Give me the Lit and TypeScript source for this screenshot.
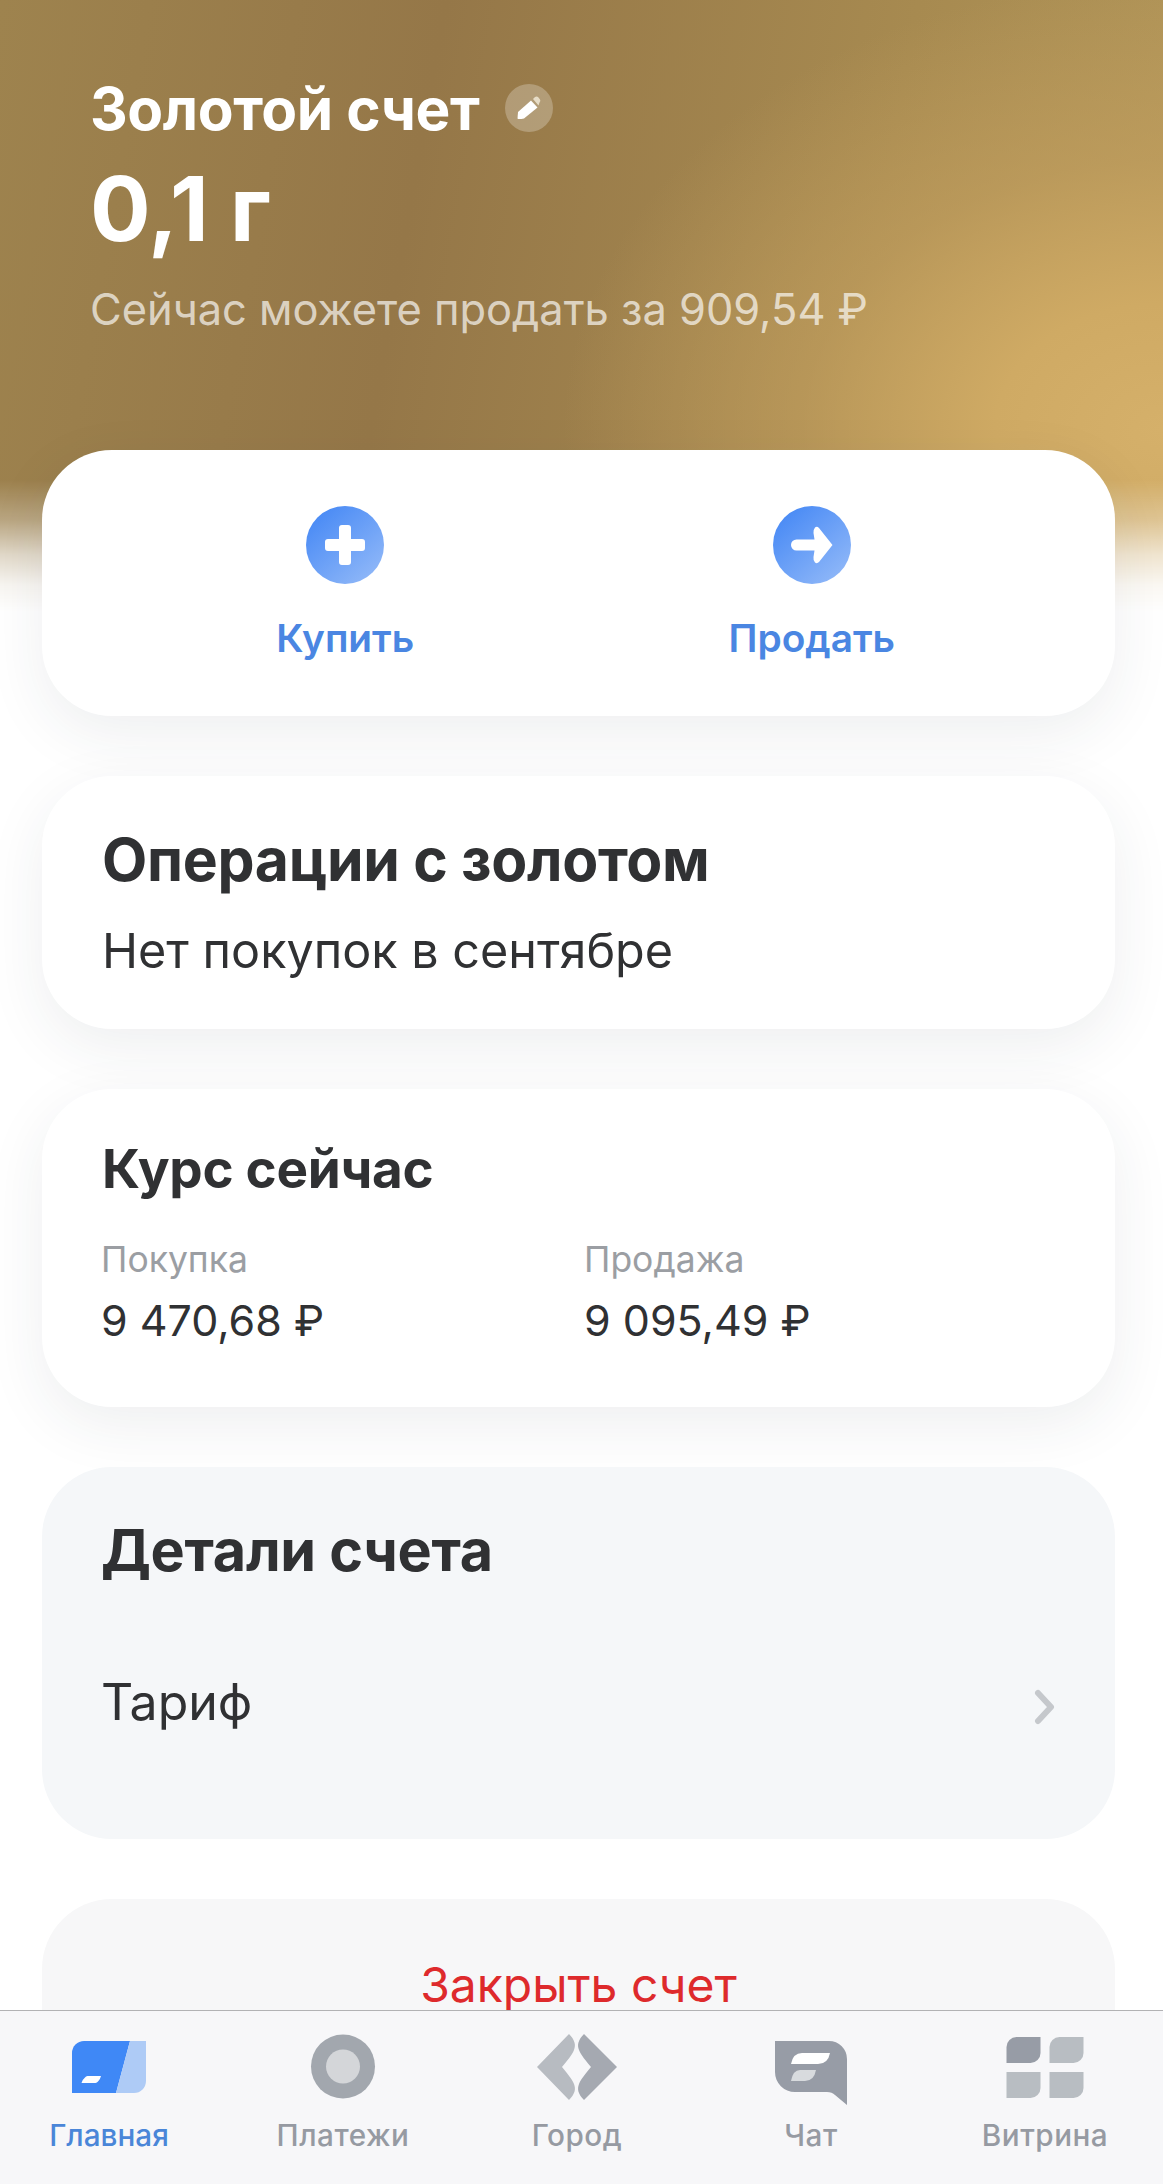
import { LitElement, html, css, svg } from 'lit'
import { customElement } from 'lit/decorators.js';

const tabs = [
  {
    label: 'Главная', active: true,
    icon: svg`<g transform="translate(5 7)">
      <path d="M12 0H58L44 52H0V12A12 12 0 0 1 12 0z" fill="#3f88f6"/>
      <path d="M58 0H74V40A12 12 0 0 1 62 52H44z" fill="#aecbf6"/>
      <path d="M13 36.500a3 3 0 0 1 2.500-1.500H29q-1 4-3 5.500a4 4 0 0 1-2.500 1.500H9.500q.5-3 3.500-5.500z" fill="#fff"/>
    </g>`,
  },
  {
    label: 'Платежи', active: false,
    icon: svg`<circle cx="42" cy="32.500" r="32" fill="#a2a7ae"/><circle cx="42" cy="32.500" r="17" fill="#d4d6d9"/>`,
  },
  {
    label: 'Город', active: false,
    icon: svg`<g transform="translate(2 0)">
      <path d="M32 0 0 33 32 66C38 60 39 55 37 50 35 45 30 39 25 33 30 27 35 21 37 16 39 11 38 6 32 0z" fill="#b7bbc1"/>
      <path d="M47 0 80 33 47 66C41 60 40 55 42 50 44 45 49 39 54 33 49 27 44 21 42 16 40 11 41 6 47 0z" fill="#a5a9b1"/>
    </g>`,
  },
  {
    label: 'Чат', active: false,
    icon: svg`<g transform="translate(6 7)">
      <path d="M0 0H54A18 18 0 0 1 72 18V64L60 54Q57 51 52 51H20A20 20 0 0 1 0 31z" fill="#979ca6"/>
      <path d="M27 12H55Q53 23 43 23H16Q18 12 27 12z" fill="#fff"/>
      <path d="M25 29H41Q39 40 30 40H16Q18 29 25 29z" fill="#d8dbde"/>
    </g>`,
  },
  {
    label: 'Витрина', active: false,
    icon: svg`<g transform="translate(3.500 3)">
      <path d="M10 0H34V16A10 10 0 0 1 24 26H0V10A10 10 0 0 1 10 0z" fill="#979ca6"/>
      <path d="M10 0H34V16A10 10 0 0 1 24 26H0V10A10 10 0 0 1 10 0z" fill="#b8bdc2" transform="translate(43 0)"/>
      <path d="M0 0H34V16A10 10 0 0 1 24 26H0z" fill="#b8bdc2" transform="translate(0 35)"/>
      <path d="M0 0H34V16A10 10 0 0 1 24 26H0z" fill="#b8bdc2" transform="translate(43 35)"/>
    </g>`,
  },
];

@customElement('app-root')
export class AppRoot extends LitElement {
  static override styles = css`
    :host {
      display: block;
      position: relative;
      height: 2184px;
      overflow: hidden;
      background: #fff;
      font-family: Inter, 'Noto Sans', sans-serif;
      color: #303133;
    }

    .hero-bg {
      position: absolute;
      left: 0;
      right: 0;
      top: 0;
      height: 640px;
      background:
        radial-gradient(ellipse 600px 450px at 1163px 430px, #d5b06a 0%, #cfaa64 28%, rgba(196, 160, 95, 0.6) 60%, rgba(170, 140, 85, 0) 100%),
        linear-gradient(100deg, #9e834e 0%, #957748 35%, #a78a50 72%, #b3975a 100%);
      -webkit-mask-image: linear-gradient(#000 0, #000 480px, rgba(0, 0, 0, 0.7) 520px, rgba(0, 0, 0, 0.3) 555px, rgba(0, 0, 0, 0.08) 585px, rgba(0, 0, 0, 0) 612px);
      mask-image: linear-gradient(#000 0, #000 480px, rgba(0, 0, 0, 0.7) 520px, rgba(0, 0, 0, 0.3) 555px, rgba(0, 0, 0, 0.08) 585px, rgba(0, 0, 0, 0) 612px);
    }

    .page {
      position: relative;
      display: flex;
      flex-direction: column;
    }

    .hero {
      height: 450px;
      box-sizing: border-box;
      padding: 70px 90px 0;
      color: #fff;
    }

    .title-row {
      display: flex;
      align-items: center;
      gap: 26px;
      height: 76px;
    }

    .title {
      font-size: 58.500px;
      font-weight: 700;
      letter-spacing: -0.4px;
    }

    .edit {
      width: 48px;
      height: 48px;
      border-radius: 50%;
      background: rgba(255, 255, 255, 0.25);
      display: flex;
      align-items: center;
      justify-content: center;
    }

    .balance {
      font-size: 90px;
      font-weight: 700;
      line-height: 100px;
      margin-top: 13px;
    }

    .sub {
      font-size: 43.400px;
      line-height: 56px;
      margin-top: 22px;
      color: rgba(255, 255, 255, 0.68);
    }

    .cards {
      display: flex;
      flex-direction: column;
      gap: 60px;
      padding: 0 48px 0 42px;
    }

    .card {
      background: #fff;
      border-radius: 70px;
      box-shadow: 0 18px 60px rgba(40, 50, 70, 0.08);
      box-sizing: border-box;
    }

    .card.flat {
      background: #f5f7f9;
      box-shadow: none;
    }

    .actions {
      height: 266px;
      display: grid;
      grid-template-columns: 1fr 1fr;
      padding: 0 70px;
    }

    .action {
      display: flex;
      flex-direction: column;
      align-items: center;
      padding-top: 56px;
      color: #4a86e2;
      font-size: 38.800px;
      font-weight: 600;
    }

    .action svg {
      display: block;
      margin-bottom: 30px;
    }

    .ops {
      height: 253px;
      padding: 51px 60px 0;
    }

    .h2 {
      font-size: 58.800px;
      font-weight: 700;
      line-height: 66px;
      letter-spacing: -0.3px;
    }

    .body {
      font-size: 48.500px;
      line-height: 60px;
      margin-top: 28px;
    }

    .rates {
      height: 318px;
      padding: 47px 60px 0 59px;
    }

    .rates .h2 {
      font-size: 53px;
      line-height: 66px;
      margin-left: 1px;
    }

    .rate-grid {
      display: grid;
      grid-template-columns: 483px 1fr;
      margin-top: 36px;
    }

    .rate-label {
      font-size: 35.500px;
      line-height: 44px;
      color: #9b9ea3;
    }

    .rate-value {
      font-size: 43px;
      line-height: 56px;
      margin-top: 10px;
    }

    .details {
      height: 372px;
      padding: 47px 60px 0 59px;
    }

    .details .h2 {
      font-size: 57.500px;
      line-height: 72px;
    }

    .row {
      display: flex;
      align-items: center;
      justify-content: space-between;
      margin-top: 84px;
      height: 64px;
      font-size: 50px;
    }

    .row svg {
      margin-top: 10px;
    }

    .close {
      height: 240px;
      padding-top: 55px;
      text-align: center;
      color: #de2a2c;
      background: #f7f7f8 !important;
      font-size: 48px;
      line-height: 62px;
    }

    .tabbar {
      position: absolute;
      left: 0;
      right: 0;
      bottom: 0;
      height: 174px;
      box-sizing: border-box;
      border-top: 1px solid #b2b2b4;
      background: #f7f7f9;
    }

    .tabs {
      display: grid;
      grid-template-columns: repeat(5, 234px);
      margin-left: -8px;
    }

    .tab {
      display: flex;
      flex-direction: column;
      align-items: center;
      color: #969aa2;
      font-size: 29.700px;
      font-weight: 500;
      letter-spacing: 0.5px;
      padding-top: 23px;
    }

    .tab.active {
      color: #4a86d8;
      letter-spacing: 0;
    }

    .tab svg {
      display: block;
      width: 84px;
      height: 72px;
      margin-bottom: 11px;
    }
  `;

  override render() {
    return html`
      <div class="hero-bg"></div>
      <div class="page">
        <div class="hero">
          <div class="title-row">
            <span class="title">Золотой счет</span>
            <span class="edit">
              <svg width="24" height="24" viewBox="0 0 24 24">
                <path d="M1 16 14 4.500 20.500 11.500 7 22.500Q1 23.500 .5 22.500z" fill="#fff"/>
                <path d="M16 3 18 1Q20 0 21.500 1.500L23 3.500Q24 5 22.500 6.500L21.500 9.500z" fill="#e6dcc6"/>
              </svg>
            </span>
          </div>
          <div class="balance">0,1 г</div>
          <div class="sub">Сейчас можете продать за 909,54 ₽</div>
        </div>
        <div class="cards">
          <div class="card actions">
            <div class="action">
              <svg width="78" height="78" viewBox="0 0 78 78">
                <defs><linearGradient id="g1" x1="0.15" y1="0.1" x2="0.85" y2="0.9">
                  <stop offset="0" stop-color="#4a8bf5"/><stop offset="1" stop-color="#8db6f8"/>
                </linearGradient></defs>
                <circle cx="39" cy="39" r="39" fill="url(#g1)"/>
                <path d="M33 22a3 3 0 0 1 3-3h6a3 3 0 0 1 3 3v11h11a3 3 0 0 1 3 3v6a3 3 0 0 1-3 3H45v11a3 3 0 0 1-3 3h-6a3 3 0 0 1-3-3V45H22a3 3 0 0 1-3-3v-6a3 3 0 0 1 3-3h11z" fill="#fff"/>
              </svg>
              Купить
            </div>
            <div class="action">
              <svg width="78" height="78" viewBox="0 0 78 78">
                <circle cx="39" cy="39" r="39" fill="url(#g1)"/>
                <path d="M42 21.500Q44 20 46 22L59.500 39 46 56Q44 58 42 56.500 40 54 40.500 51L41.500 44.500H23.500a5.500 5.500 0 0 1 0-11H41.500L40.500 27Q40 24 42 21.500z" fill="#fff"/>
              </svg>
              Продать
            </div>
          </div>
          <div class="card ops">
            <div class="h2">Операции с золотом</div>
            <div class="body">Нет покупок в сентябре</div>
          </div>
          <div class="card rates">
            <div class="h2">Курс сейчас</div>
            <div class="rate-grid">
              <div>
                <div class="rate-label">Покупка</div>
                <div class="rate-value">9 470,68 ₽</div>
              </div>
              <div>
                <div class="rate-label">Продажа</div>
                <div class="rate-value">9 095,49 ₽</div>
              </div>
            </div>
          </div>
          <div class="card flat details">
            <div class="h2">Детали счета</div>
            <div class="row">
              <span>Тариф</span>
              <svg width="21" height="36" viewBox="0 0 21 36">
                <path d="M4 4 17 18 4 32" fill="none" stroke="#c5c8cc" stroke-width="6" stroke-linecap="round" stroke-linejoin="round"/>
              </svg>
            </div>
          </div>
          <div class="card flat close">Закрыть счет</div>
        </div>
      </div>
      <div class="tabbar">
        <div class="tabs">
          ${tabs.map(t => html`
            <div class="tab ${t.active ? 'active' : ''}">
              <svg viewBox="0 0 84 72">${t.icon}</svg>
              ${t.label}
            </div>
          `)}
        </div>
      </div>
    `;
  }
}
